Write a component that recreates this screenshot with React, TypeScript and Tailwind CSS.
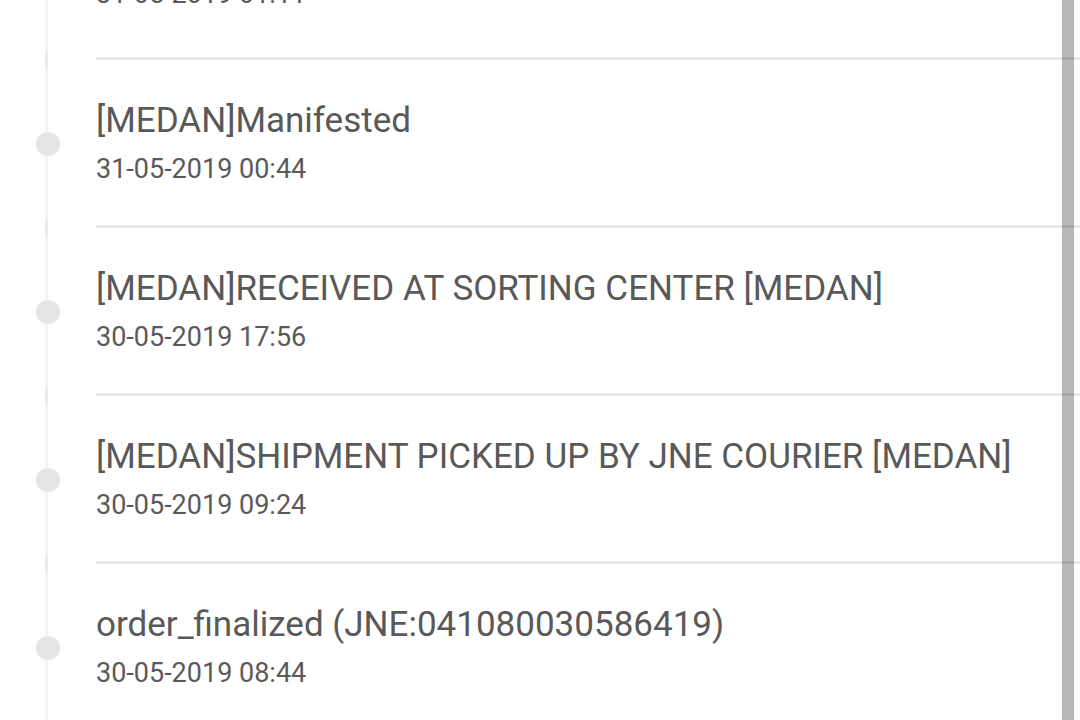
import React from 'react';

type Track = {
  title: string;
  time: string;
};

const tracks: Track[] = [
  { title: '[MEDAN]Processed at sorting center', time: '31-05-2019 01:11' },
  { title: '[MEDAN]Manifested', time: '31-05-2019 00:44' },
  { title: '[MEDAN]RECEIVED AT SORTING CENTER [MEDAN]', time: '30-05-2019 17:56' },
  { title: '[MEDAN]SHIPMENT PICKED UP BY JNE COURIER [MEDAN]', time: '30-05-2019 09:24' },
  { title: 'order_finalized (JNE:041080030586419)', time: '30-05-2019 08:44' },
];

const TrackRow = ({ item, first }: { item: Track; first: boolean }) => {
  return (
    <div className="flex h-[168px]">
      {/* timeline column: line pieces + dot */}
      <div className="flex w-[96px] shrink-0 pl-[36px]">
        <div className="flex w-6 flex-col">
          <div className="ml-[9px] h-[6px] w-[3px] bg-[#ebebeb]" />
          <div className="ml-[9px] h-[66px] w-[3px] bg-[#f3f3f3]" />
          <div className="h-6 w-6 rounded-full bg-[#e6e6e6]" />
          <div className="ml-[9px] w-[3px] flex-1 bg-[#f3f3f3]" />
          <div className="ml-[9px] h-[7px] w-[3px] bg-[#ebebeb]" />
        </div>
      </div>

      {/* content */}
      <div
        className={
          'flex-1 border-b-[3px] border-[#e8e8e8] ' + (first ? 'pt-[30px]' : 'pt-[37px]')
        }
      >
        <p className="text-[35px] leading-[48px] text-[#595959] whitespace-nowrap">{item.title}</p>
        <p className="mt-[6px] text-[27px] leading-[36px] text-[#5a5a5a]">{item.time}</p>
      </div>
    </div>
  );
};

const App = () => {
  return (
    <div className="relative h-[720px] w-[1080px] overflow-hidden bg-white font-['Roboto',sans-serif]">
      <div className="-mt-[108px] flex flex-col">
        {tracks.map((item, i) => (
          <TrackRow key={item.time} item={item} first={i === 0} />
        ))}
      </div>

      {/* scrollbar overlay */}
      <div className="absolute right-[6px] top-0 bottom-0 w-[12px] bg-[rgba(0,0,0,0.28)]" />
    </div>
  );
};

export default App;
